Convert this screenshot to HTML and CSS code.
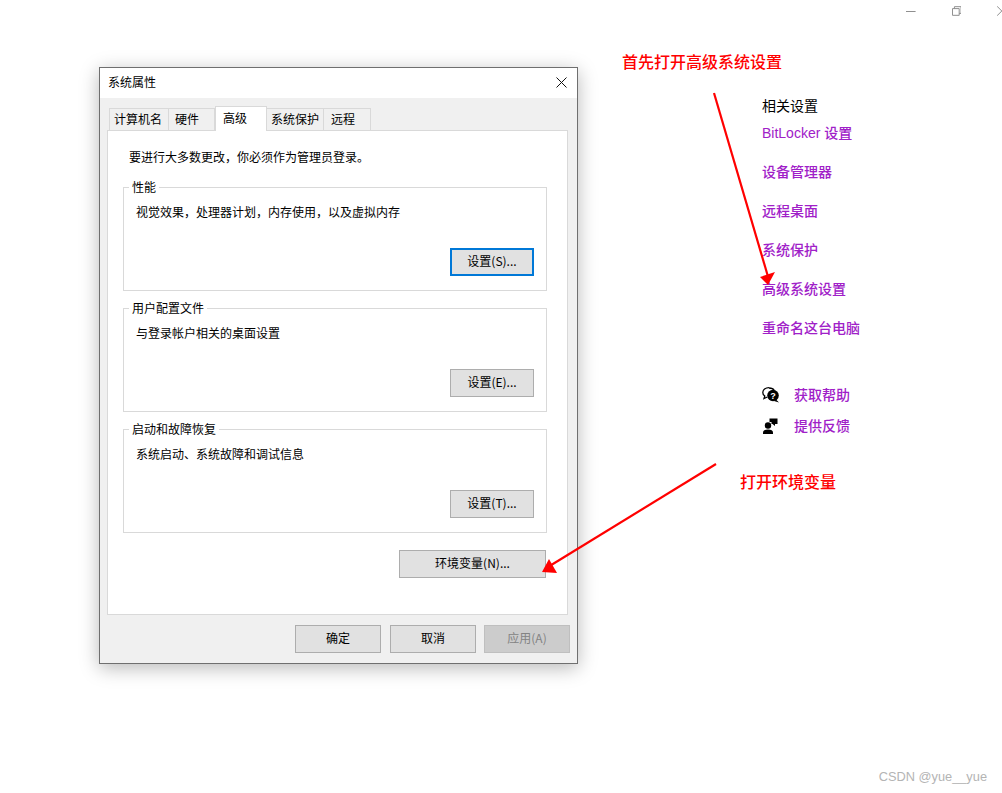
FILE: index.html
```html
<!DOCTYPE html>
<html lang="zh-CN">
<head>
  <meta charset="UTF-8" />
  <title>系统属性</title>
  <link rel="stylesheet" href="styles.css">
</head>
<body>
  <div class="winbar">
    <svg class="win-min" width="10" height="1" viewBox="0 0 10 1"><path d="M0 .5h10" stroke="#8a8a8a"/></svg>
    <svg class="win-restore" width="10" height="10" viewBox="0 0 10 10" fill="none" stroke="#8a8a8a"><path d="M.5 2.500h7v7h-7zM2.500 2.500v-2h7v7h-2"/></svg>
    <svg class="win-close" width="5" height="10" viewBox="0 0 5 10" fill="none" stroke="#8a8a8a"><path d="M0 0l5 5l-5 5"/></svg>
  </div>

  <main class="content">
    <section class="dialog">
      <div class="titlebar">
        <span>系统属性</span>
        <svg width="11" height="11" viewBox="0 0 11 11" stroke="#111"><path d="M.5 .5l10 10M10.500 .5l-10 10"/></svg>
      </div>
      <div class="dialog-body">
        <div class="tabs">
          <div class="tab tab-1">计算机名</div>
          <div class="tab tab-2">硬件</div>
          <div class="tab tab-3 active">高级</div>
          <div class="tab tab-4">系统保护</div>
          <div class="tab tab-5">远程</div>
        </div>
        <div class="pane">
          <p class="notice">要进行大多数更改，你必须作为管理员登录。</p>
          <fieldset class="group">
            <legend>性能</legend>
            <p>视觉效果，处理器计划，内存使用，以及虚拟内存</p>
            <button class="btn btn-set focused">设置(S)...</button>
          </fieldset>
          <fieldset class="group">
            <legend>用户配置文件</legend>
            <p>与登录帐户相关的桌面设置</p>
            <button class="btn btn-set">设置(E)...</button>
          </fieldset>
          <fieldset class="group">
            <legend>启动和故障恢复</legend>
            <p>系统启动、系统故障和调试信息</p>
            <button class="btn btn-set">设置(T)...</button>
          </fieldset>
          <button class="btn btn-env">环境变量(N)...</button>
        </div>
        <div class="footer">
          <button class="btn btn-ok">确定</button>
          <button class="btn">取消</button>
          <button class="btn disabled">应用(A)</button>
        </div>
      </div>
    </section>

    <aside class="related">
      <h3>相关设置</h3>
      <a>BitLocker 设置</a>
      <a>设备管理器</a>
      <a>远程桌面</a>
      <a>系统保护</a>
      <a>高级系统设置</a>
      <a>重命名这台电脑</a>
      <div class="help-row first">
        <svg width="18" height="16" viewBox="0 0 18 16">
          <path d="M7 .7C3.400 .7 .8 2.800 .8 5.400c0 1.500 .8 2.700 2 3.600L2 11.500l3.300-1.500" fill="none" stroke="#000" stroke-width="1.300"/>
          <path d="M7 1c2.600 0 4.500 1 5.300 2.500" fill="none" stroke="#000" stroke-width="1.300"/>
          <circle cx="11" cy="8.500" r="5.800" fill="#000"/>
          <path d="M14 12.500l3 3-5-1.500z" fill="#000"/>
          <text x="11" y="11.800" class="qmark">?</text>
        </svg>
        <a>获取帮助</a>
      </div>
      <div class="help-row">
        <svg width="18" height="16" viewBox="0 0 18 16">
          <circle cx="6" cy="7.500" r="3.200" fill="#000"/>
          <path d="M1 16v-1.500c0-2 1.800-3 5-3s5 1 5 3V16z" fill="#000"/>
          <path d="M7.500 .5h8v5.500h-2.500v2l-2.500-2H9.500V4H7.500z" fill="#000"/>
        </svg>
        <a>提供反馈</a>
      </div>
    </aside>
  </main>

  <!-- red notes drawn over the screenshot -->
  <div class="note note-1">首先打开高级系统设置</div>
  <div class="note note-2">打开环境变量</div>
  <svg class="arrows" width="1002" height="793" viewBox="0 0 1002 793">
    <path d="M714 93L769 280" stroke="#f00" stroke-width="2.200" fill="none"/>
    <path d="M768 285L760 277L775 272z" fill="#f00"/>
    <path d="M716 464L548 567" stroke="#f00" stroke-width="2.200" fill="none"/>
    <path d="M542 572L549 559L557 573z" fill="#f00"/>
  </svg>
  <div class="watermark">CSDN @yue__yue</div>
</body>
</html>
```

FILE: styles.css
```css
* {
  box-sizing: border-box;
}
body {
  margin: 0;
  width: 1002px;
  height: 793px;
  overflow: hidden;
  background: #fff;
  position: relative;
  font-family: "Noto Sans CJK SC", sans-serif;
  font-size: 12px;
  color: #000;
}
p {
  margin: 0;
}

.winbar {
  height: 67px;
  display: flex;
  align-items: flex-start;
}
.win-min {
  margin: 11px 0 0 906px;
}
.win-restore {
  margin: 6px 0 0 36px;
}
.win-close {
  margin: 6px 0 0 36px;
}

.content {
  display: flex;
  align-items: flex-start;
  padding-left: 99px;
}

/* dialog */
.dialog {
  width: 479px;
  height: 597px;
  border: 1px solid #6f6f6f;
  background: #f0f0f0;
  box-shadow: 0 4px 18px rgba(0, 0, 0, 0.28);
  display: flex;
  flex-direction: column;
}
.titlebar {
  height: 30px;
  flex: none;
  background: #fff;
  display: flex;
  align-items: center;
  justify-content: space-between;
  padding: 0 10px 2px 8px;
  line-height: 16px;
}
.dialog-body {
  flex: 1;
  display: flex;
  flex-direction: column;
}
.tabs {
  height: 24px;
  margin-top: 8px;
  padding-left: 9px;
  display: flex;
  align-items: flex-end;
}
.tab {
  height: 22px;
  line-height: 19px;
  border: 1px solid #d9d9d9;
  border-bottom: none;
  border-left: none;
  background: #f0f0f0;
}
.tab-1 {
  width: 60px;
  padding-left: 4px;
  border-left: 1px solid #d9d9d9;
}
.tab-2 {
  width: 46px;
  padding-left: 6px;
}
.tab-3 {
  width: 52px;
}
.tab-4 {
  width: 57px;
  padding-left: 4px;
}
.tab-5 {
  width: 47px;
  padding-left: 7px;
}
.tab.active {
  height: 25px;
  margin-bottom: -1px;
  line-height: 21px;
  background: #fff;
  border-left: 1px solid #d9d9d9;
  padding-left: 7px;
  position: relative;
  z-index: 1;
}
.pane {
  width: 461px;
  height: 485px;
  margin-left: 7px;
  padding: 18px 20px 0 15px;
  background: #fff;
  border: 1px solid #d9d9d9;
  display: flex;
  flex-direction: column;
}
.notice {
  line-height: 16px;
  margin-left: 6px;
  margin-bottom: 14px;
}
.group {
  margin: 0 0 9px;
  padding: 0 12px 14px;
  min-width: 0;
  width: 424px;
  border: 1px solid #d9d9d9;
  display: flex;
  flex-direction: column;
}
.group legend {
  margin-left: -7px;
  padding: 0 3px;
  line-height: 16px;
}
.group p {
  line-height: 16px;
  margin-top: 9px;
}
.btn {
  width: 86px;
  height: 28px;
  padding: 0 0 3px;
  border: 1px solid #adadad;
  background: #e1e1e1;
  font: inherit;
  color: #000;
}
.btn-set {
  width: 84px;
  margin-top: 28px;
  align-self: flex-end;
}
.btn.focused {
  border: 2px solid #0078d7;
}
.btn-env {
  width: 147px;
  margin-top: 8px;
  margin-right: 1px;
  align-self: flex-end;
}
.footer {
  display: flex;
  justify-content: flex-end;
  gap: 8px;
  padding: 10px 7px 0 0;
}
.btn-ok {
  margin-right: 1px;
}
.btn.disabled {
  background: #cccccc;
  border-color: #bfbfbf;
  color: #838383;
}

/* right column */
.related {
  margin-left: 184px;
  padding-top: 28px;
  display: flex;
  flex-direction: column;
  font-size: 14px;
  line-height: 20px;
}
.related h3 {
  margin: 0 0 -11px;
  font-size: 14px;
  font-weight: 400;
}
.related a {
  font-family: "Liberation Sans", "Noto Sans CJK SC", sans-serif;
  color: #a020c8;
  font-weight: 500;
  margin-top: 19px;
}
.help-row {
  display: flex;
  align-items: center;
  gap: 14px;
  margin-top: 11px;
  height: 20px;
}
.help-row.first {
  margin-top: 47px;
}
.help-row a {
  margin-top: 0;
}
.qmark {
  fill: #fff;
  font-size: 9px;
  font-weight: 700;
  text-anchor: middle;
  font-family: "Liberation Sans", sans-serif;
}

/* notes over the screenshot */
.note {
  position: absolute;
  color: #f00;
  font-size: 16px;
  font-weight: 500;
  line-height: 20px;
}
.note-1 {
  left: 622px;
  top: 51px;
}
.note-2 {
  left: 740px;
  top: 471px;
}
.arrows {
  position: absolute;
  left: 0;
  top: 0;
  pointer-events: none;
}
.watermark {
  position: absolute;
  right: 15px;
  top: 768px;
  font-family: "Liberation Sans", sans-serif;
  font-size: 12.8px;
  line-height: 18px;
  color: #b4b4b4;
}
```
